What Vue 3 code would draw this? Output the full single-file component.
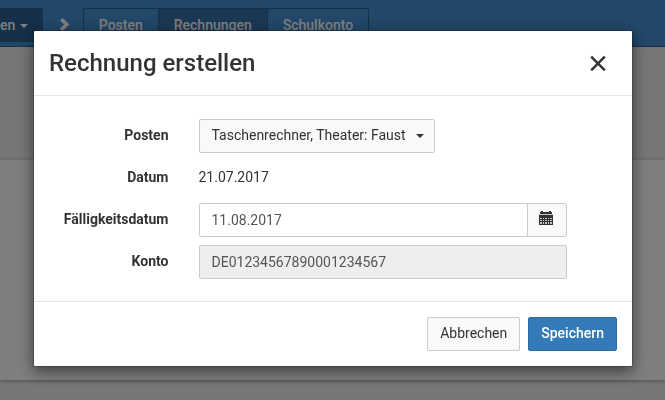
<script setup>
import { ref } from 'vue';

const tabs = ['Posten', 'Rechnungen', 'Schulkonto'];
const activeTab = ref('Rechnungen');

const show = ref(true);
const items = ref('Taschenrechner, Theater: Faust');
const date = '21.07.2017';
const dueDate = ref('11.08.2017');
const account = 'DE01234567890001234567';

function closeModal() {
  show.value = false;
}
</script>

<template>
  <div class="page">
    <header class="navbar">
      <button type="button" class="crumb">en <span class="caret"></span></button>
      <svg class="chevron" viewBox="0 0 10 14" aria-hidden="true">
        <path d="M0 2.5 2.5 0 9.5 6.5 2.5 13 0 10.5 4.3 6.5Z" />
      </svg>
      <nav class="tabs">
        <button
          v-for="tab in tabs"
          :key="tab"
          type="button"
          class="tab"
          :class="{ active: tab === activeTab }"
          @click="activeTab = tab"
        >{{ tab }}</button>
      </nav>
    </header>
    <main class="content">
      <section class="panel"></section>
    </main>
  </div>

  <div v-if="show" class="modal-overlay" @click.self="closeModal">
    <form class="modal-window" role="dialog" aria-labelledby="modal-title" @submit.prevent="closeModal">
      <div class="modal-header">
        <h3 id="modal-title">Rechnung erstellen</h3>
        <button type="button" class="close-button" aria-label="Schließen" @click="closeModal">
          <svg viewBox="0 0 16 16" aria-hidden="true">
            <path d="M1.2 1.7 14.8 15.3M14.8 1.7 1.2 15.3" />
          </svg>
        </button>
      </div>

      <div class="modal-body">
        <div class="form-group">
          <label for="items">Posten</label>
          <div class="field">
            <div class="select-wrap">
              <select id="items" v-model="items">
                <option>Taschenrechner, Theater: Faust</option>
              </select>
              <span class="caret"></span>
            </div>
          </div>
        </div>
        <div class="form-group">
          <label for="date">Datum</label>
          <div class="field">
            <output id="date">{{ date }}</output>
          </div>
        </div>
        <div class="form-group">
          <label for="due-date">Fälligkeitsdatum</label>
          <div class="field input-group">
            <input id="due-date" v-model="dueDate" type="text" />
            <button type="button" class="addon" aria-label="Kalender">
              <svg viewBox="0 0 14 14" aria-hidden="true">
                <path d="M2 0h2v1h6V0h2v1h1v2H1V1h1z" />
                <path class="light" d="M0 3h14v11H0z" />
                <path d="M0 4h14v3H0zM0 7h1v7H0zM13 7h1v7h-1zM3 7h1v7H3zM5 7h1v7H5zM8 7h1v7H8zM10 7h1v7h-1zM1 8h12v1H1zM1 10h12v1H1zM1 13h12v1H1z" />
              </svg>
            </button>
          </div>
        </div>
        <div class="form-group">
          <label for="account">Konto</label>
          <div class="field">
            <input id="account" type="text" :value="account" disabled />
          </div>
        </div>
      </div>

      <div class="modal-footer">
        <button type="button" class="btn btn-default" @click="closeModal">Abbrechen</button>
        <button type="submit" class="btn btn-primary">Speichern</button>
      </div>
    </form>
  </div>
</template>

<style>
body {
  margin: 0;
  background: #eee;
}
</style>

<style scoped>
.page,
.modal-overlay {
  font-family: Roboto, "Liberation Sans", sans-serif;
  font-size: 14px;
  line-height: 20px;
  color: #333;
}
.page *,
.modal-overlay * {
  box-sizing: border-box;
}
button,
input,
select {
  font: inherit;
  margin: 0;
}
.page {
  height: 100vh;
  overflow: hidden;
}
.navbar {
  display: flex;
  align-items: flex-start;
  height: 47px;
  padding-top: 8px;
  background: #448ed0;
  border-bottom: 1px solid #2c5f90;
}
.crumb {
  height: 34px;
  padding: 0 15px 0 0;
  border: 0;
  border-radius: 0 2px 2px 0;
  background: #2c6094;
  color: #fff;
  font-weight: 500;
}
.caret {
  display: inline-block;
  vertical-align: middle;
  margin-left: 1px;
  border-top: 4px solid;
  border-left: 4px solid transparent;
  border-right: 4px solid transparent;
}
.chevron {
  width: 10px;
  height: 14px;
  margin: 10px 13px 0 17px;
  fill: #fff;
}
.tabs {
  display: flex;
}
.tab {
  height: 34px;
  padding: 0 15px;
  border: 1px solid #2c5f90;
  background: #448ed0;
  color: #fff;
  font-weight: 500;
}
.tab + .tab {
  margin-left: -1px;
}
.tab:first-child {
  border-radius: 2px 0 0 2px;
}
.tab:last-child {
  border-radius: 0 2px 2px 0;
}
.tab.active {
  background: #3570a8;
}
.content {
  padding-top: 113px;
}
.panel {
  height: 220px;
  background: #fff;
  box-shadow: 0 1px 4px rgba(0, 0, 0, 0.35);
}
.modal-overlay {
  position: fixed;
  inset: 0;
  padding: 30px 32px 30px 33px;
  overflow: hidden;
  background: rgba(0, 0, 0, 0.5);
}
.modal-window {
  max-width: 600px;
  margin: 0 auto;
  background: #fff;
  background-clip: padding-box;
  border: 1px solid rgba(0, 0, 0, 0.2);
  border-radius: 2px;
  box-shadow: 0 5px 15px rgba(0, 0, 0, 0.5);
}
.modal-header {
  display: flex;
  justify-content: space-between;
  align-items: center;
  padding: 15px;
  border-bottom: 1px solid #e5e5e5;
}
.modal-header h3 {
  margin: 0;
  font-size: 24px;
  line-height: 34px;
  font-weight: 500;
}
.close-button {
  display: flex;
  padding: 9px 11px;
  border: 0;
  background: none;
  cursor: pointer;
}
.close-button svg {
  width: 16px;
  height: 16px;
  fill: none;
  stroke: #333;
  stroke-width: 2.5;
}
.modal-body {
  display: flex;
  flex-direction: column;
  gap: 8px;
  padding: 23px 0 22px;
}
.form-group {
  display: grid;
  grid-template-columns: 3fr 8fr 1fr;
}
label {
  padding: 6px 15px 8px 0;
  font-weight: 700;
  text-align: right;
}
.field {
  padding: 0 15px;
}
.select-wrap {
  display: inline-block;
  position: relative;
  vertical-align: top;
}
.select-wrap .caret {
  position: absolute;
  right: 11px;
  top: 15px;
  pointer-events: none;
}
select {
  appearance: none;
  height: 34px;
  padding: 0 27px 2px 12px;
  border: 1px solid #ccc;
  border-radius: 2px;
  background: #f9f9f9;
  color: #333;
}
output {
  display: block;
  padding: 6px 0 8px;
}
input {
  width: 100%;
  height: 34px;
  padding: 6px 12px;
  border: 1px solid #ccc;
  border-radius: 2px;
  background: #fff;
  color: #555;
}
input:disabled {
  background: #eee;
}
.input-group {
  display: flex;
}
.input-group input {
  flex: 1;
  min-width: 0;
  border-radius: 2px 0 0 2px;
}
.addon {
  display: flex;
  align-items: flex-start;
  width: 40px;
  height: 34px;
  margin-left: -1px;
  padding: 7px 11px;
  border: 1px solid #ccc;
  border-radius: 0 2px 2px 0;
  background: #f9f9f9;
}
.addon svg {
  width: 14px;
  height: 14px;
  fill: #333;
  shape-rendering: crispEdges;
}
.addon .light {
  fill: #c4c4c8;
}
.modal-footer {
  display: flex;
  justify-content: flex-end;
  gap: 8px;
  padding: 15px;
  border-top: 1px solid #e5e5e5;
}
.btn {
  height: 34px;
  padding: 0 12px 2px;
  border: 1px solid #ccc;
  border-radius: 2px;
  cursor: pointer;
}
.btn-default {
  background: #f9f9f9;
  color: #333;
}
.btn-primary {
  background: #337ab7;
  border-color: #2e6da4;
  color: #fff;
  font-weight: 500;
}
</style>
